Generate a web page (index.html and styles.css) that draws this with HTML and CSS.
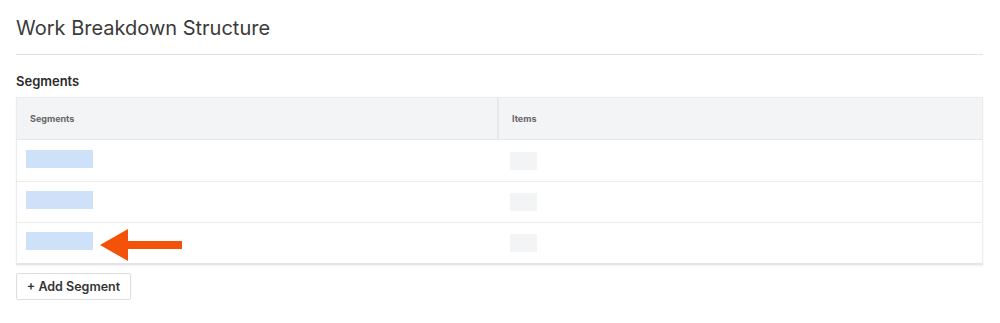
FILE: index.html
```html
<!DOCTYPE html>
<html>
<head>
    <title>Work Breakdown Structure</title>
    <link rel="stylesheet" href="styles.css">
</head>
<body>
    <div class="page">
        <h1 class="title">Work Breakdown Structure</h1>
        <h2 class="section">Segments</h2>
        <div class="table">
            <div class="row head">
                <div class="cell seg">Segments</div>
                <div class="cell items">Items</div>
            </div>
            <div class="row">
                <div class="cell seg"><span class="ph-seg"></span></div>
                <div class="cell items"><span class="ph-item"></span></div>
            </div>
            <div class="row">
                <div class="cell seg"><span class="ph-seg"></span></div>
                <div class="cell items"><span class="ph-item"></span></div>
            </div>
            <div class="row">
                <div class="cell seg">
                    <span class="ph-seg"></span>
                    <svg class="arrow" width="90" height="34" viewBox="0 0 90 34">
                        <polygon points="1,17 29,1 29,13 83,13 83,21 29,21 29,33" fill="#f45208"/>
                    </svg>
                </div>
                <div class="cell items"><span class="ph-item"></span></div>
            </div>
        </div>
        <button type="button" class="add">+ Add Segment</button>
    </div>
</body>
</html>
```

FILE: styles.css
```css
* {
    box-sizing: border-box;
}
body {
    font-family: Inter, "Liberation Sans", sans-serif;
    background-color: #fff;
    color: #333;
    margin: 0;
    padding: 0;
}
.page {
    padding: 0 17px 0 16px;
}
.title {
    font-size: 20px;
    font-weight: 400;
    margin: 0;
    padding: 15px 0 13px;
    line-height: 26px;
    color: #3a3a3a;
    border-bottom: 1px solid #e3e3e3;
}
.section {
    font-size: 13px;
    font-weight: 600;
    margin: 18px 0 7px;
    line-height: 17px;
    color: #2a2a2a;
}
.table {
    border: 1px solid #ececec;
    border-bottom: 2px solid #e3e5e8;
    box-shadow: 0 1px 2px rgba(0, 0, 0, 0.06);
}
.row {
    display: flex;
    height: 41px;
    border-top: 1px solid #ececec;
}
.row:first-child {
    border-top: none;
}
.row.head {
    height: 42px;
    background-color: #f3f4f6;
    border-bottom: 1px solid #e6e7ea;
    font-size: 9px;
    font-weight: 700;
    color: #666;
}
.row.head + .row {
    border-top: none;
}
.cell {
    display: flex;
    align-items: center;
}
.cell.seg {
    width: 482px;
    padding-left: 9px;
}
.head .cell.seg {
    padding-left: 13px;
    border-right: 2px solid #e6e7ea;
}
.cell.items {
    flex: 1;
    padding-left: 11px;
}
.head .cell.items {
    padding-left: 13px;
}
.ph-seg {
    display: block;
    width: 67px;
    height: 18px;
    background-color: #cfe0f9;
    margin-top: -4px;
}
.ph-item {
    display: block;
    width: 27px;
    height: 18px;
    background-color: #f3f4f6;
}
.arrow {
    display: block;
    margin-left: 6px;
    margin-top: 3px;
}
.add {
    display: block;
    margin-top: 8px;
    font-family: Inter, "Liberation Sans", sans-serif;
    font-size: 12.5px;
    font-weight: 600;
    color: #333;
    background-color: #fff;
    border: 1px solid #ddd;
    border-radius: 2px;
    padding: 0 8px;
    height: 27px;
    width: 115px;
}
```
